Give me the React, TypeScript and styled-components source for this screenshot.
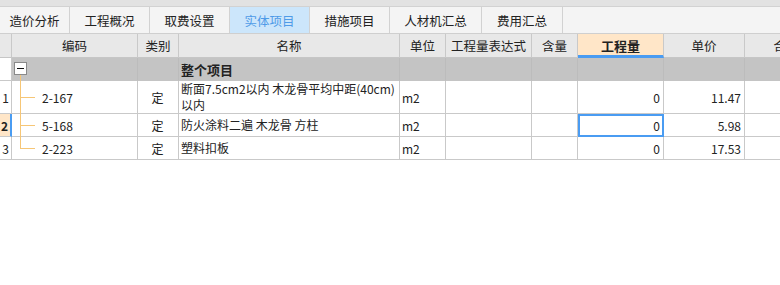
import React, { FC } from 'react';
import styled, { createGlobalStyle, css } from 'styled-components';

const GlobalStyle = createGlobalStyle`
  html, body {
    margin: 0;
    padding: 0;
    background: #ffffff;
  }
  body {
    font-family: "Noto Sans CJK SC", "Liberation Sans", sans-serif;
    font-size: 12px;
    color: #222222;
  }
`;

const COLUMNS = '12px 126px 41px 221px 46px 86px 46px 86px 81px 83px';

const tabs = ['造价分析', '工程概况', '取费设置', '实体项目', '措施项目', '人材机汇总', '费用汇总'];
const tabWidths = [70, 80, 80, 80, 80, 92, 81];

interface Item {
  no: string;
  code: string;
  kind: string;
  name: string[];
  unit: string;
  qty: string;
  price: string;
  tall?: boolean;
  selected?: boolean;
  last?: boolean;
}

const items: Item[] = [
  { no: '1', code: '2-167', kind: '定', name: ['断面7.5cm2以内 木龙骨平均中距(40cm)', '以内'], unit: 'm2', qty: '0', price: '11.47', tall: true },
  { no: '2', code: '5-168', kind: '定', name: ['防火涂料二遍 木龙骨 方柱'], unit: 'm2', qty: '0', price: '5.98', selected: true },
  { no: '3', code: '2-223', kind: '定', name: ['塑料扣板'], unit: 'm2', qty: '0', price: '17.53', last: true },
];

const App: FC = () => {
  return (
    <Page>
      <GlobalStyle />
      <TopStrip />
      <TabBar>
        {tabs.map((t, i) => (
          <Tab key={t} active={t === '实体项目'} style={{ width: tabWidths[i] }}>
            {t}
          </Tab>
        ))}
        <TabFiller />
      </TabBar>
      <Grid>
        <HeaderRow>
          <HeadCell />
          <HeadCell>编码</HeadCell>
          <HeadCell>类别</HeadCell>
          <HeadCell>名称</HeadCell>
          <HeadCell>单位</HeadCell>
          <HeadCell>工程量表达式</HeadCell>
          <HeadCell>含量</HeadCell>
          <HeadCell focus>工程量</HeadCell>
          <HeadCell>单价</HeadCell>
          <HeadCell>合价</HeadCell>
        </HeaderRow>
        <GroupRow>
          <NoCell />
          <GroupCell>
            <Toggle>
              <Minus />
            </Toggle>
            <TreeStem />
          </GroupCell>
          <GroupCell />
          <GroupCell bold>整个项目</GroupCell>
          <GroupCell />
          <GroupCell />
          <GroupCell />
          <GroupCell />
          <GroupCell />
          <GroupCell />
        </GroupRow>
        {items.map((it) => (
          <DataRow key={it.no} tall={it.tall}>
            <NoCell active={it.selected}>{it.no}</NoCell>
            <CodeCell last={it.last}>{it.code}</CodeCell>
            <Cell align="center">{it.kind}</Cell>
            <NameCell>
              {it.name.map((line) => (
                <NameLine key={line}>{line}</NameLine>
              ))}
            </NameCell>
            <Cell>{it.unit}</Cell>
            <Cell />
            <Cell />
            <Cell align="right" selected={it.selected}>
              {it.qty}
            </Cell>
            <Cell align="right">{it.price}</Cell>
            <Cell />
          </DataRow>
        ))}
      </Grid>
    </Page>
  );
};

const Page = styled.div`
  width: 780px;
  height: 285px;
  overflow: hidden;
  background: #ffffff;
`;

const TopStrip = styled.div`
  height: 6px;
  background: #e2e2e2;
  border-bottom: 1px solid #d2d2d2;
`;

const TabBar = styled.div`
  display: flex;
  height: 26px;
  background: #f4f4f4;
  border-bottom: 1px solid #cfcfcf;
`;

const Tab = styled.div<{ active?: boolean }>`
  box-sizing: border-box;
  display: flex;
  align-items: center;
  justify-content: center;
  border-right: 1px solid #d2d2d2;
  font-size: 12.5px;
  color: ${(p) => (p.active ? '#4f9be8' : '#222222')};
  background: ${(p) => (p.active ? '#cce6fb' : 'transparent')};
  padding-top: 1px;
`;

const TabFiller = styled.div`
  flex: 1;
`;

const Grid = styled.div`
  display: flex;
  flex-direction: column;
`;

const rowBase = css`
  display: grid;
  grid-template-columns: ${COLUMNS};
`;

const HeaderRow = styled.div`
  ${rowBase};
  height: 24px;
`;

const HeadCell = styled.div<{ focus?: boolean }>`
  box-sizing: border-box;
  display: flex;
  align-items: center;
  justify-content: center;
  white-space: nowrap;
  overflow: hidden;
  border-right: 1px solid #c9c9c9;
  border-bottom: ${(p) => (p.focus ? '3px solid #4a9cf2' : '1px solid #c6c6c6')};
  background: ${(p) => (p.focus ? '#ffe6c8' : '#e8e8e8')};
  font-size: ${(p) => (p.focus ? '13px' : '12.5px')};
  font-weight: ${(p) => (p.focus ? 700 : 400)};
  color: #222222;
  padding-top: ${(p) => (p.focus ? '2px' : '0')};
`;

const GroupRow = styled.div`
  ${rowBase};
  height: 23px;
`;

const GroupCell = styled.div<{ bold?: boolean }>`
  position: relative;
  box-sizing: border-box;
  display: flex;
  align-items: center;
  padding-left: 2px;
  background: #c4c4c4;
  border-right: 1px solid #bcbcbc;
  border-bottom: 1px solid #c4c4c4;
  font-size: 13px;
  font-weight: ${(p) => (p.bold ? 700 : 400)};
  color: #222222;
`;

const Toggle = styled.div`
  position: absolute;
  left: 2px;
  top: 4px;
  width: 11px;
  height: 11px;
  border: 1px solid #8a8a8a;
  background: #ffffff;
  display: flex;
  align-items: center;
  justify-content: center;
`;

const Minus = styled.div`
  width: 7px;
  height: 1px;
  background: #111111;
`;

const TreeStem = styled.div`
  position: absolute;
  left: 8px;
  top: 17px;
  bottom: -1px;
  width: 1px;
  background: #f6c676;
`;

const DataRow = styled.div<{ tall?: boolean }>`
  ${rowBase};
  height: ${(p) => (p.tall ? '33px' : '23px')};
`;

const Cell = styled.div<{ align?: 'left' | 'center' | 'right'; selected?: boolean }>`
  box-sizing: border-box;
  display: flex;
  align-items: center;
  justify-content: ${(p) => (p.align === 'center' ? 'center' : p.align === 'right' ? 'flex-end' : 'flex-start')};
  padding: 0 3px 0 2px;
  white-space: nowrap;
  overflow: hidden;
  border-right: 1px solid #c9c9c9;
  border-bottom: 1px solid #c9c9c9;
  ${(p) =>
    p.selected &&
    css`
      border: 2px solid #4a9cf2;
      padding-right: 2px;
    `}
`;

const NoCell = styled.div<{ active?: boolean }>`
  box-sizing: border-box;
  display: flex;
  align-items: center;
  justify-content: flex-end;
  padding-right: 2px;
  overflow: hidden;
  font-weight: ${(p) => (p.active ? 700 : 400)};
  background: ${(p) => (p.active ? '#ffe6c8' : '#ffffff')};
  border-right: ${(p) => (p.active ? '2px solid #4a9cf2' : '1px solid #c9c9c9')};
  border-bottom: 1px solid #c9c9c9;
`;

const CodeCell = styled.div<{ last?: boolean }>`
  position: relative;
  box-sizing: border-box;
  display: flex;
  align-items: center;
  padding-left: 30px;
  border-right: 1px solid #c9c9c9;
  border-bottom: 1px solid #c9c9c9;
  &::before {
    content: '';
    position: absolute;
    left: 8px;
    top: 0;
    width: 1px;
    height: ${(p) => (p.last ? '50%' : 'calc(100% + 1px)')};
    background: #f6c676;
  }
  &::after {
    content: '';
    position: absolute;
    left: 8px;
    top: 50%;
    width: 15px;
    height: 1px;
    background: #f6c676;
  }
`;

const NameCell = styled.div`
  box-sizing: border-box;
  display: flex;
  flex-direction: column;
  justify-content: center;
  padding-left: 2px;
  white-space: nowrap;
  overflow: hidden;
  border-right: 1px solid #c9c9c9;
  border-bottom: 1px solid #c9c9c9;
`;

const NameLine = styled.div`
  height: 16px;
  line-height: 16px;
`;

export default App;
